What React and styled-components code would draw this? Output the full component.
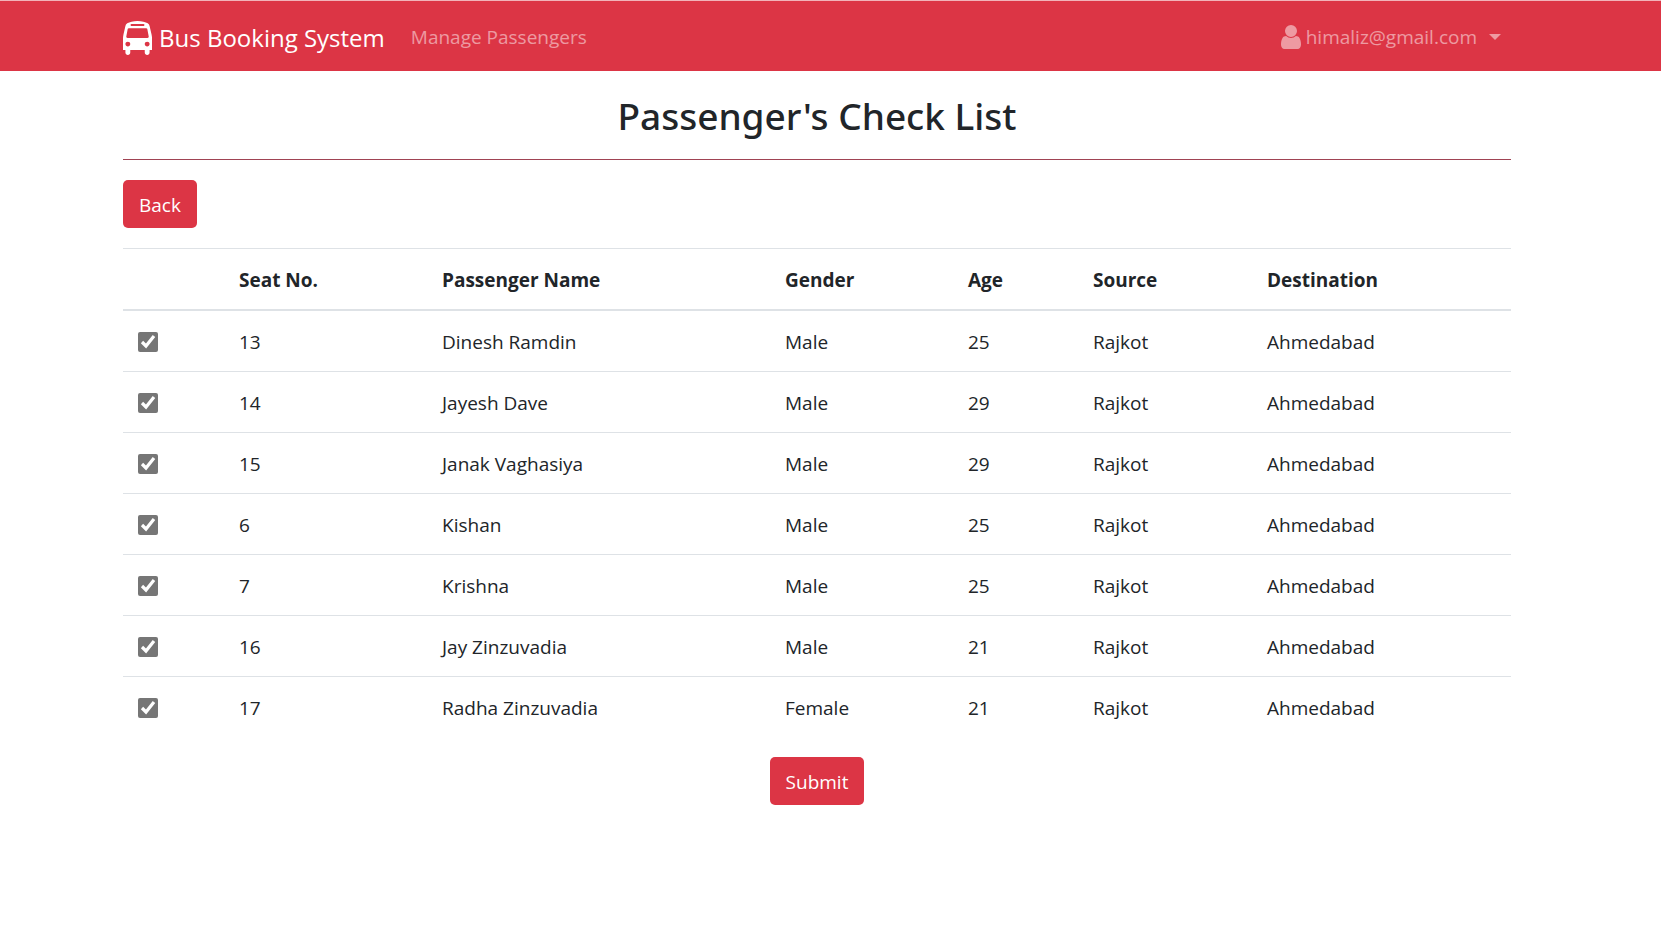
import React from "react";
import styled, { createGlobalStyle } from "styled-components";

const GlobalStyle = createGlobalStyle`
  *, *::before, *::after { box-sizing: border-box; }
  body {
    margin: 0;
    background: #fff;
    color: #212529;
    font-family: "Segoe UI", "Open Sans", "Noto Sans", sans-serif;
    font-size: 19px;
    line-height: 30px;
  }
`;

const Header = styled.header`
  background: #dc3545;
  border-top: 1px solid #f2b3b9;
  padding-right: 27px;
`;

const Container = styled.div`
  width: 85%;
  max-width: 1388px;
  margin: 0 auto;
`;

const NavBar = styled(Container)`
  display: flex;
  align-items: center;
  min-height: 70px;
  padding: 3px 10px 0 0;
`;

const Brand = styled.a`
  display: flex;
  align-items: center;
  gap: 7px;
  margin-right: 26px;
  color: #fff;
  font-size: 24px;
  line-height: 38px;
  text-decoration: none;
  white-space: nowrap;
`;

const NavLink = styled.a`
  padding-bottom: 2px;
  color: rgba(255, 255, 255, 0.5);
  text-decoration: none;
  white-space: nowrap;
`;

const UserMenu = styled.button`
  display: flex;
  align-items: center;
  gap: 5px;
  margin-left: auto;
  padding: 0 0 2px;
  border: 0;
  background: none;
  color: rgba(255, 255, 255, 0.5);
  font: inherit;
  cursor: pointer;
`;

const Caret = styled.span`
  margin-left: 7px;
  border-top: 6px solid;
  border-left: 6px solid transparent;
  border-right: 6px solid transparent;
`;

const Main = styled.main`
  padding-right: 27px;
`;

const Title = styled.h1`
  margin: 0;
  padding: 21px 0 19px;
  border-bottom: 1px solid #a04353;
  font-family: "Segoe UI", "Noto Sans", "Open Sans", sans-serif;
  font-size: 37px;
  font-weight: 500;
  line-height: 48px;
  text-align: center;
`;

const Button = styled.button`
  display: block;
  margin: ${(p) => (p.$centered ? "0 auto" : "20px 0")};
  padding: 10px 16px 8px;
  border: 0;
  border-radius: 5px;
  background: #dc3545;
  color: #fff;
  font: inherit;
  cursor: pointer;
`;

const Table = styled.table`
  width: 100%;
  margin-bottom: 20px;
  border-collapse: collapse;
  table-layout: fixed;
`;

const Col = styled.col`
  width: ${(p) => p.$width}px;
`;

const HeadCell = styled.th`
  padding: 16px 15px 14px;
  border-top: 1px solid #dee2e6;
  border-bottom: 2px solid #dee2e6;
  font-weight: 700;
  text-align: left;
  white-space: nowrap;
`;

const Cell = styled.td`
  padding: 16px 15px 14px;
  border-top: 1px solid #dee2e6;
  white-space: nowrap;
`;

const Checkbox = styled.input`
  display: block;
  width: 20px;
  height: 20px;
  margin: 0;
  accent-color: #767676;
`;

const BusIcon = () => (
  <svg width="29" height="34" viewBox="0 0 1536 1792" fill="currentColor" aria-hidden="true">
    <path d="M384 1216q0-53-37.5-90.5t-90.5-37.5-90.5 37.5-37.5 90.5 37.5 90.5 90.5 37.5 90.5-37.5 37.5-90.5zm1024 0q0-53-37.5-90.5t-90.5-37.5-90.5 37.5-37.5 90.5 37.5 90.5 90.5 37.5 90.5-37.5 37.5-90.5zm-46-396l-72-384q-5-23-22.5-37.5t-40.5-14.5h-918q-23 0-40.5 14.5t-22.5 37.5l-72 384q-5 30 14 53t49 23h1062q30 0 49-23t14-53zm-226-612q0-20-14-34t-34-14h-640q-20 0-34 14t-14 34 14 34 34 14h640q20 0 34-14t14-34zm400 725v603h-128v128q0 53-37.5 90.5t-90.5 37.5-90.5-37.5-37.5-90.5v-128h-768v128q0 53-37.5 90.5t-90.5 37.5-90.5-37.5-37.5-90.5v-128h-128v-603q0-112 25-223l103-454q9-78 97.5-137t230-89 312.5-30 312.5 30 230 89 97.5 137l105 454q23 102 23 223z" />
  </svg>
);

const UserIcon = () => (
  <svg width="20" height="24" viewBox="256 128 1280 1536" fill="currentColor" aria-hidden="true">
    <path d="M1536 1399q0 109-62.5 187t-150.5 78h-854q-88 0-150.5-78t-62.5-187q0-85 8.5-160.5t31.5-152 58.5-131 94-89 134.5-34.5q131 128 313 128t313-128q76 0 134.5 34.5t94 89 58.5 131 31.5 152 8.5 160.5zm-256-887q0 159-112.5 271.5t-271.5 112.5-271.5-112.5-112.5-271.5 112.5-271.5 271.5-112.5 271.5 112.5 112.5 271.5z" />
  </svg>
);

const columns = [
  { label: "", width: 101 },
  { label: "Seat No.", width: 203 },
  { label: "Passenger Name", width: 343 },
  { label: "Gender", width: 183 },
  { label: "Age", width: 125 },
  { label: "Source", width: 174 },
  { label: "Destination", width: 259 },
];

const passengers = [
  { seat: 13, name: "Dinesh Ramdin", gender: "Male", age: 25 },
  { seat: 14, name: "Jayesh Dave", gender: "Male", age: 29 },
  { seat: 15, name: "Janak Vaghasiya", gender: "Male", age: 29 },
  { seat: 6, name: "Kishan", gender: "Male", age: 25 },
  { seat: 7, name: "Krishna", gender: "Male", age: 25 },
  { seat: 16, name: "Jay Zinzuvadia", gender: "Male", age: 21 },
  { seat: 17, name: "Radha Zinzuvadia", gender: "Female", age: 21 },
];

export default function App() {
  return (
    <>
      <GlobalStyle />
      <Header>
        <NavBar as="nav">
          <Brand href="#">
            <BusIcon />
            Bus Booking System
          </Brand>
          <NavLink href="#">Manage Passengers</NavLink>
          <UserMenu type="button" aria-haspopup="menu">
            <UserIcon />
            himaliz@gmail.com
            <Caret />
          </UserMenu>
        </NavBar>
      </Header>
      <Main>
        <Container>
          <Title>Passenger's Check List</Title>
          <Button type="button">Back</Button>
          <form onSubmit={(e) => e.preventDefault()}>
            <Table>
              <colgroup>
                {columns.map((c) => (
                  <Col key={c.label} $width={c.width} />
                ))}
              </colgroup>
              <thead>
                <tr>
                  {columns.map((c) => (
                    <HeadCell key={c.label} scope="col">
                      {c.label}
                    </HeadCell>
                  ))}
                </tr>
              </thead>
              <tbody>
                {passengers.map((p) => (
                  <tr key={p.seat}>
                    <Cell>
                      <Checkbox type="checkbox" defaultChecked aria-labelledby={`name-${p.seat}`} />
                    </Cell>
                    <Cell>{p.seat}</Cell>
                    <Cell id={`name-${p.seat}`}>{p.name}</Cell>
                    <Cell>{p.gender}</Cell>
                    <Cell>{p.age}</Cell>
                    <Cell>Rajkot</Cell>
                    <Cell>Ahmedabad</Cell>
                  </tr>
                ))}
              </tbody>
            </Table>
            <Button type="submit" $centered>
              Submit
            </Button>
          </form>
        </Container>
      </Main>
    </>
  );
}
